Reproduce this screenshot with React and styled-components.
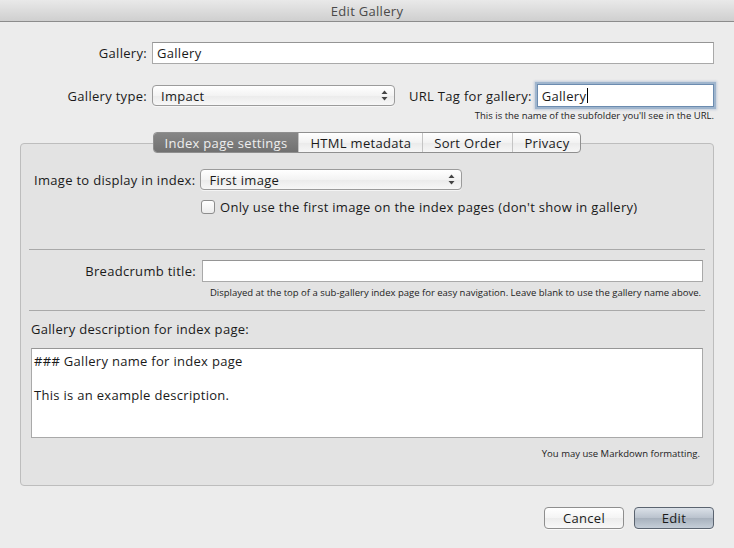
import React from 'react';
import styled, { createGlobalStyle } from 'styled-components';

const GlobalStyle = createGlobalStyle`
  html, body {
    margin: 0;
    padding: 0;
    background: #ececec;
  }
  body {
    font-family: "Open Sans", "DejaVu Sans", sans-serif;
    font-size: 13px;
    letter-spacing: 0.3px;
    color: #1a1a1a;
  }
`;

const Window = styled.div`
  width: 734px;
  height: 548px;
  display: flex;
  flex-direction: column;
  background: #ececec;
  overflow: hidden;
`;

const TitleBar = styled.div`
  height: 21px;
  flex: none;
  display: flex;
  align-items: center;
  justify-content: center;
  background: linear-gradient(#e9e9e9, #cfcfcf);
  border-bottom: 1px solid #8c8c8c;
  color: #4a4a4a;
  font-size: 13px;
`;

const Body = styled.div`
  flex: 1;
  display: flex;
  flex-direction: column;
  padding: 20px 20px 0 20px;
`;

const Row = styled.div`
  display: flex;
  align-items: center;
  gap: ${p => p.gap || 5}px;
  margin-top: ${p => p.top || 0}px;
`;

const Label = styled.div`
  flex: none;
  width: ${p => (p.width ? `${p.width}px` : 'auto')};
  text-align: right;
  white-space: nowrap;
  padding-left: ${p => p.pad || 0}px;
`;

const Field = styled.div`
  box-sizing: border-box;
  height: ${p => p.h || 22}px;
  width: ${p => (p.width ? `${p.width}px` : 'auto')};
  flex: ${p => (p.width ? 'none' : 1)};
  background: #fff;
  border: 1px solid #a9a9a9;
  border-top-color: #959595;
  padding: 0 4px;
  display: flex;
  align-items: center;
  white-space: nowrap;
  ${p => p.focus && `
    border: 1px solid #6c8cb0;
    box-shadow: 0 0 0 2px #9fb5cd, 0 0 2px 3px rgba(120, 150, 190, 0.35);
  `}
`;

const Caret = styled.span`
  display: inline-block;
  width: 1px;
  height: 15px;
  background: #000;
  margin-left: 1px;
`;

const Popup = styled.div`
  box-sizing: border-box;
  height: 21px;
  width: ${p => p.width}px;
  flex: none;
  border: 1px solid #9b9b9b;
  border-radius: 4px;
  background: linear-gradient(#ffffff, #f3f3f3 50%, #ebebeb 51%, #f7f7f7);
  box-shadow: 0 1px 0 rgba(255, 255, 255, 0.6);
  display: flex;
  align-items: center;
  justify-content: space-between;
  padding: 0 6px 0 8px;
`;

const Arrows = styled.svg`
  width: 7px;
  height: 11px;
  flex: none;
`;

const Help = styled.div`
  font-size: 9.5px;
  letter-spacing: 0;
  color: #222;
  text-align: right;
  margin-top: ${p => p.top || 0}px;
  padding-right: ${p => p.right || 0}px;
`;

const TabBox = styled.div`
  margin-top: 21px;
  height: 343px;
  box-sizing: border-box;
  border: 1px solid #bdbdbd;
  border-radius: 4px;
  background: #e3e3e3;
  display: flex;
  flex-direction: column;
  padding: 0 8px;
`;

const Tabs = styled.div`
  align-self: center;
  margin-top: -12px;
  display: flex;
  height: 21px;
  box-sizing: border-box;
  border: 1px solid #8f8f8f;
  border-radius: 4px;
  overflow: hidden;
  background: linear-gradient(#ffffff, #f2f2f2 50%, #eaeaea 51%, #f6f6f6);
`;

const Tab = styled.div`
  display: flex;
  align-items: center;
  padding: 0 ${p => p.pad || 11}px;
  border-left: ${p => (p.first ? 'none' : '1px solid #c4c4c4')};
  color: ${p => (p.active ? '#eeeeee' : '#1a1a1a')};
  background: ${p => (p.active ? 'linear-gradient(#868686, #717171)' : 'transparent')};
`;

const Section = styled.div`
  padding: ${p => p.pad || '0 0'};
  display: flex;
  flex-direction: column;
`;

const Separator = styled.div`
  height: 1px;
  background: #a9a9a9;
  margin-top: ${p => p.top || 0}px;
`;

const Check = styled.div`
  width: 12px;
  height: 12px;
  flex: none;
  border: 1px solid #8d8d8d;
  border-radius: 3px;
  background: linear-gradient(#ffffff, #ececec);
`;

const TextArea = styled.div`
  box-sizing: border-box;
  height: 90px;
  background: #fff;
  border: 1px solid #a9a9a9;
  border-top-color: #969696;
  padding: 4px 2px;
  line-height: 17px;
  white-space: pre;
  margin-top: 10px;
`;

const Footer = styled.div`
  display: flex;
  justify-content: flex-end;
  gap: 10px;
  margin-top: 21px;
`;

const Button = styled.div`
  box-sizing: border-box;
  width: 80px;
  height: 22px;
  border-radius: 4px;
  display: flex;
  align-items: center;
  justify-content: center;
  border: 1px solid ${p => (p.primary ? '#5b6470' : '#8e8e8e')};
  background: ${p =>
    p.primary
      ? 'linear-gradient(#dbe1e8, #b9c2cd 50%, #a7b1bd 51%, #c5ced8)'
      : 'linear-gradient(#ffffff, #f4f4f4 50%, #ececec 51%, #f8f8f8)'};
  box-shadow: 0 1px 0 rgba(255, 255, 255, 0.7);
`;

const UpDown = () => (
  <Arrows viewBox="0 0 7 11">
    <path d="M3.5 0.5 L6.5 4 L0.5 4 Z" fill="#444" />
    <path d="M3.5 10.5 L6.5 7 L0.5 7 Z" fill="#444" />
  </Arrows>
);

export default function App() {
  return (
    <Window>
      <GlobalStyle />
      <TitleBar>Edit Gallery</TitleBar>
      <Body>
        <Row>
          <Label width={127}>Gallery:</Label>
          <Field>Gallery</Field>
        </Row>

        <Row top={20}>
          <Label width={127}>Gallery type:</Label>
          <Popup width={243}>
            <span>Impact</span>
            <UpDown />
          </Popup>
          <Label pad={9}>URL Tag for gallery:</Label>
          <Field focus h={23}>
            Gallery<Caret />
          </Field>
        </Row>
        <Help top={2}>This is the name of the subfolder you'll see in the URL.</Help>

        <TabBox>
          <Tabs>
            <Tab first active>Index page settings</Tab>
            <Tab>HTML metadata</Tab>
            <Tab>Sort Order</Tab>
            <Tab>Privacy</Tab>
          </Tabs>

          <Section pad="16px 0 0 5px">
            <Row>
              <Label>Image to display in index:</Label>
              <Popup width={262}>
                <span>First image</span>
                <UpDown />
              </Popup>
            </Row>
            <Row top={8} gap={5}>
              <Label width={162} />
              <Check />
              <span>Only use the first image on the index pages (don't show in gallery)</span>
            </Row>
          </Section>

          <Separator top={33} />

          <Section pad="10px 2px 0 0">
            <Row gap={6}>
              <Label width={167}>Breadcrumb title:</Label>
              <Field>{''}</Field>
            </Row>
            <Help top={4} right={2}>
              Displayed at the top of a sub-gallery index page for easy navigation. Leave blank to use the gallery name above.
            </Help>
          </Section>

          <Separator top={11} />

          <Section pad="9px 2px 0 2px">
            <div>Gallery description for index page:</div>
            <TextArea>{'### Gallery name for index page\n\nThis is an example description.'}</TextArea>
            <Help top={9} right={3}>You may use Markdown formatting.</Help>
          </Section>
        </TabBox>

        <Footer>
          <Button>Cancel</Button>
          <Button primary>Edit</Button>
        </Footer>
      </Body>
    </Window>
  );
}
